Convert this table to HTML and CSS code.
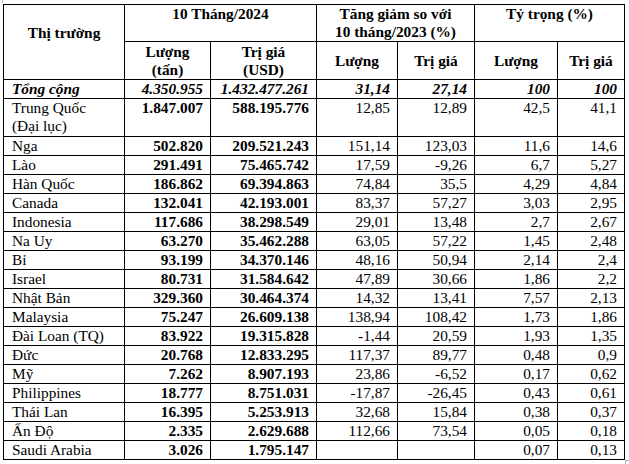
FILE: index.html
```html
<!DOCTYPE html>
<html lang="vi">
<head>
<meta charset="utf-8">
<title>Thị trường</title>
<link rel="stylesheet" href="styles.css">
</head>
<body>
<span class="mark mark-tl"></span>
<table class="grid">
  <colgroup>
    <col class="c1"><col class="c2"><col class="c3"><col class="c4"><col class="c5"><col class="c6"><col class="c7">
  </colgroup>
  <thead>
    <tr class="h1">
      <th rowspan="2" class="market-head">Thị trường</th>
      <th colspan="2" class="top">10 Tháng/2024</th>
      <th colspan="2" class="top">Tăng giảm so với<br>10 tháng/2023 (%)</th>
      <th colspan="2" class="top">Tỷ trọng (%)</th>
    </tr>
    <tr class="h2">
      <th class="sub2">Lượng<br>(tấn)</th>
      <th class="sub2">Trị giá<br>(USD)</th>
      <th>Lượng</th>
      <th>Trị giá</th>
      <th>Lượng</th>
      <th>Trị giá</th>
    </tr>
  </thead>
  <tbody>
    <tr class="total">
      <td class="name">Tổng cộng</td><td>4.350.955</td><td>1.432.477.261</td><td>31,14</td><td>27,14</td><td>100</td><td>100</td>
    </tr>
    <tr class="tall">
      <td class="name">Trung Quốc<br>(Đại lục)</td><td class="b">1.847.007</td><td class="b">588.195.776</td><td>12,85</td><td>12,89</td><td>42,5</td><td>41,1</td>
    </tr>
    <tr><td class="name">Nga</td><td class="b">502.820</td><td class="b">209.521.243</td><td>151,14</td><td>123,03</td><td>11,6</td><td>14,6</td></tr>
    <tr><td class="name">Lào</td><td class="b">291.491</td><td class="b">75.465.742</td><td>17,59</td><td>-9,26</td><td>6,7</td><td>5,27</td></tr>
    <tr><td class="name">Hàn Quốc</td><td class="b">186.862</td><td class="b">69.394.863</td><td>74,84</td><td>35,5</td><td>4,29</td><td>4,84</td></tr>
    <tr><td class="name">Canada</td><td class="b">132.041</td><td class="b">42.193.001</td><td>83,37</td><td>57,27</td><td>3,03</td><td>2,95</td></tr>
    <tr><td class="name">Indonesia</td><td class="b">117.686</td><td class="b">38.298.549</td><td>29,01</td><td>13,48</td><td>2,7</td><td>2,67</td></tr>
    <tr><td class="name">Na Uy</td><td class="b">63.270</td><td class="b">35.462.288</td><td>63,05</td><td>57,22</td><td>1,45</td><td>2,48</td></tr>
    <tr><td class="name">Bỉ</td><td class="b">93.199</td><td class="b">34.370.146</td><td>48,16</td><td>50,94</td><td>2,14</td><td>2,4</td></tr>
    <tr><td class="name">Israel</td><td class="b">80.731</td><td class="b">31.584.642</td><td>47,89</td><td>30,66</td><td>1,86</td><td>2,2</td></tr>
    <tr><td class="name">Nhật Bản</td><td class="b">329.360</td><td class="b">30.464.374</td><td>14,32</td><td>13,41</td><td>7,57</td><td>2,13</td></tr>
    <tr><td class="name">Malaysia</td><td class="b">75.247</td><td class="b">26.609.138</td><td>138,94</td><td>108,42</td><td>1,73</td><td>1,86</td></tr>
    <tr><td class="name">Đài Loan (TQ)</td><td class="b">83.922</td><td class="b">19.315.828</td><td>-1,44</td><td>20,59</td><td>1,93</td><td>1,35</td></tr>
    <tr><td class="name">Đức</td><td class="b">20.768</td><td class="b">12.833.295</td><td>117,37</td><td>89,77</td><td>0,48</td><td>0,9</td></tr>
    <tr><td class="name">Mỹ</td><td class="b">7.262</td><td class="b">8.907.193</td><td>23,86</td><td>-6,52</td><td>0,17</td><td>0,62</td></tr>
    <tr><td class="name">Philippines</td><td class="b">18.777</td><td class="b">8.751.031</td><td>-17,87</td><td>-26,45</td><td>0,43</td><td>0,61</td></tr>
    <tr><td class="name">Thái Lan</td><td class="b">16.395</td><td class="b">5.253.913</td><td>32,68</td><td>15,84</td><td>0,38</td><td>0,37</td></tr>
    <tr><td class="name">Ấn Độ</td><td class="b">2.335</td><td class="b">2.629.688</td><td>112,66</td><td>73,54</td><td>0,05</td><td>0,18</td></tr>
    <tr><td class="name">Saudi Arabia</td><td class="b">3.026</td><td class="b">1.795.147</td><td></td><td></td><td>0,07</td><td>0,13</td></tr>
  </tbody>
</table>
<span class="mark mark-br"></span>
</body>
</html>
```

FILE: styles.css
```css
html, body {
  margin: 0;
  padding: 0;
  background: #ffffff;
}

body {
  position: relative;
  width: 629px;
  height: 464px;
  overflow: hidden;
  font-family: "Liberation Serif", "Times New Roman", serif;
  font-size: 15.33px;
  line-height: 18px;
  color: #000000;
}

.grid {
  margin: 4px 0 0 3px;
  border-collapse: separate;
  border-spacing: 0;
  table-layout: fixed;
  width: 622px;
  border-top: 1px solid #000;
  border-left: 1px solid #000;
}

.c1 { width: 121px; }
.c2 { width: 86px; }
.c3 { width: 106px; }
.c4 { width: 81px; }
.c5 { width: 77px; }
.c6 { width: 83px; }
.c7 { width: 67px; }

.grid th,
.grid td {
  box-sizing: border-box;
  border-right: 1px solid #000;
  border-bottom: 1px solid #000;
  padding: 0 7px 0 8px;
  white-space: nowrap;
  overflow: hidden;
}

.grid th {
  font-weight: bold;
  text-align: center;
  vertical-align: middle;
  padding: 0;
}

.grid th.top {
  vertical-align: top;
}

.grid th.market-head {
  vertical-align: middle;
  padding-bottom: 18px;
}

.grid th.sub2 {
  padding-top: 1px;
}

.grid td {
  text-align: right;
  vertical-align: top;
}

.grid td.name {
  text-align: left;
}

.grid td.b {
  font-weight: bold;
}

.grid tr.total td {
  font-weight: bold;
  font-style: italic;
}

.grid tr.tall td {
  padding-bottom: 1px;
}

.mark {
  position: absolute;
  border-color: #b4b4b4;
  border-style: solid;
  border-width: 0;
}

.mark-tl {
  left: 0;
  top: 0;
  width: 2px;
  height: 3px;
  border-right-width: 1px;
}

.mark-br {
  left: 625px;
  top: 460px;
  width: 4px;
  height: 4px;
  border-left-width: 1px;
  border-top-width: 1px;
}
```
